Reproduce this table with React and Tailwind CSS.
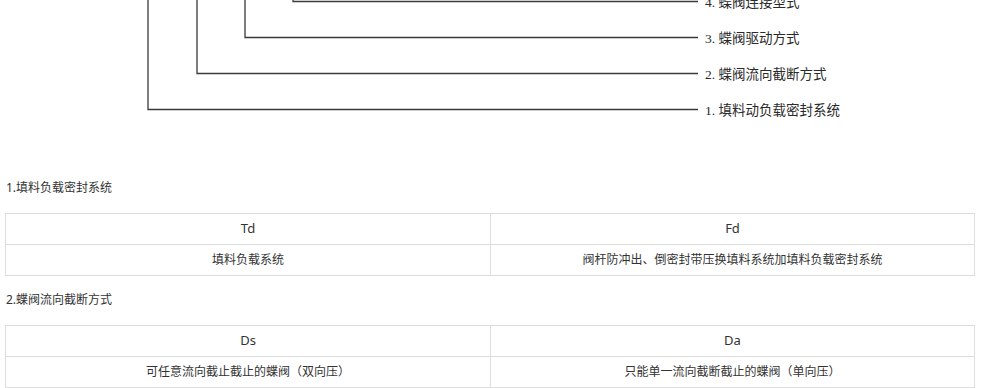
import React from "react";

const diagram = [
  { x: 293, y: 1.5, label: "4. 蝶阀连接型式" },
  { x: 245, y: 37.5, label: "3. 蝶阀驱动方式" },
  { x: 197, y: 73.5, label: "2. 蝶阀流向截断方式" },
  { x: 148, y: 109.5, label: "1. 填料动负载密封系统" },
];

function Table({ head, body }) {
  return (
    <div className="mx-[5px] w-[970px] border border-[#dddddd] text-[12px] text-[#333333]">
      <div className="grid grid-cols-2 h-[30px]">
        <div className="flex items-center justify-center text-[13px]">{head[0]}</div>
        <div className="flex items-center justify-center border-l border-[#dddddd] text-[13px]">{head[1]}</div>
      </div>
      <div className="grid grid-cols-2 h-[31px] border-t border-[#dddddd]">
        <div className="flex items-center justify-center">{body[0]}</div>
        <div className="flex items-center justify-center border-l border-[#dddddd]">{body[1]}</div>
      </div>
    </div>
  );
}

export default function App() {
  return (
    <div
      className="w-[983px] h-[388px] overflow-hidden bg-white"
      style={{ fontFamily: '"Noto Sans", "Noto Sans CJK SC", sans-serif' }}
    >
      <svg width="983" height="175" className="block">
        {diagram.map((d) => (
          <g key={d.label}>
            <path
              d={`M ${d.x} -5 L ${d.x} ${d.y} L 698 ${d.y}`}
              fill="none"
              stroke="#3a3a3a"
              strokeWidth="1.3"
            />
            <text
              x="705"
              y={d.y + 5}
              fontSize="13.5"
              fill="#2a2a2a"
              fontFamily='"Liberation Serif", "Noto Sans CJK SC", serif'
            >
              {d.label}
            </text>
          </g>
        ))}
      </svg>
      <div className="h-[26px] flex items-center pl-[6px] text-[12px] text-[#333333]">1.填料负载密封系统</div>
      <div className="mt-[12px]">
        <Table head={["Td", "Fd"]} body={["填料负载系统", "阀杆防冲出、倒密封带压换填料系统加填料负载密封系统"]} />
      </div>
      <div className="mt-[11px] h-[26px] flex items-center pl-[6px] text-[12px] text-[#333333]">2.蝶阀流向截断方式</div>
      <div className="mt-[12px]">
        <Table head={["Ds", "Da"]} body={["可任意流向截止截止的蝶阀（双向压）", "只能单一流向截断截止的蝶阀（单向压）"]} />
      </div>
    </div>
  );
}
